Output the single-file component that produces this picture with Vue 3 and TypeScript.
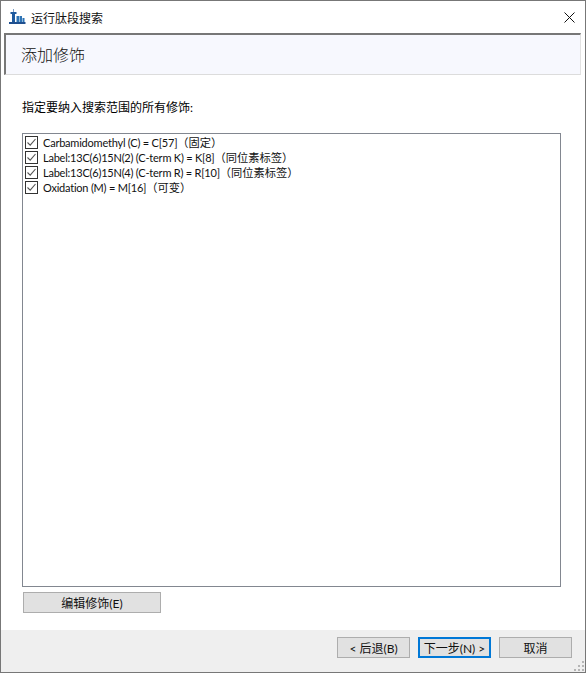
<script setup lang="ts">
type Mod = { name: string; kind: string }

const mods: Mod[] = [
  { name: 'Carbamidomethyl (C) = C[57]', kind: '（固定）' },
  { name: 'Label:13C(6)15N(2) (C-term K) = K[8]', kind: '（同位素标签）' },
  { name: 'Label:13C(6)15N(4) (C-term R) = R[10]', kind: '（同位素标签）' },
  { name: 'Oxidation (M) = M[16]', kind: '（可变）' },
]
</script>

<template>
  <main class="dialog">
    <header class="titlebar">
      <svg class="app-icon" width="17" height="16" viewBox="0 0 17 16">
        <path d="M4.2 0 H4.8 V3 H7.5 V5 H6 V13 H3 V5 H1.5 V3 H4.2 Z" fill="#1f5a9e" />
        <path d="M7.5 7 H10 V13 H7.5 Z M10.5 7 H13 V13 H10.5 Z M13.5 9 H15.5 V13 H13.5 Z" fill="#2e74b5" />
        <path d="M0 13 H16.5 V15 H0 Z" fill="#1f4f8f" />
      </svg>
      <span class="title">运行肽段搜索</span>
      <svg class="close" width="11" height="11" viewBox="0 0 11 11">
        <path d="M0.5 0.5 L10.5 10.5 M10.5 0.5 L0.5 10.5" stroke="#111" stroke-width="1" fill="none" />
      </svg>
    </header>

    <section class="banner">添加修饰</section>

    <section class="content">
      <p class="prompt">指定要纳入搜索范围的所有修饰:</p>
      <ul class="mod-list">
        <li v-for="mod in mods" :key="mod.name" class="mod">
          <span class="check">
            <svg width="11" height="11" viewBox="0 0 11 11">
              <path d="M1.5 5.5 L4.2 8.2 L9.5 2" stroke="#555" stroke-width="1.1" fill="none" />
            </svg>
          </span>
          <span class="mod-name">{{ mod.name }}</span>
          <span class="mod-kind">{{ mod.kind }}</span>
        </li>
      </ul>
      <button type="button" class="btn edit">编辑修饰(E)</button>
    </section>

    <footer class="footer">
      <button type="button" class="btn nav">&lt; 后退(B)</button>
      <button type="button" class="btn nav primary">下一步(N) &gt;</button>
      <button type="button" class="btn nav">取消</button>
      <svg class="grip" width="12" height="12" viewBox="0 0 12 12">
        <path d="M9 1h2v2H9z M5 5h2v2H5z M9 5h2v2H9z M1 9h2v2H1z M5 9h2v2H5z M9 9h2v2H9z" fill="#b5b5b5" />
      </svg>
    </footer>
  </main>
</template>

<style>
html,
body {
  margin: 0;
  background: #fff;
}
</style>

<style scoped>
.dialog {
  width: 586px;
  height: 673px;
  box-sizing: border-box;
  border: 1px solid #777;
  display: flex;
  flex-direction: column;
  background: #fff;
  color: #000;
  font-family: Lato, "Noto Sans CJK SC", sans-serif;
  font-size: 12px;
}

.titlebar {
  height: 32px;
  flex: none;
  display: flex;
  align-items: center;
  padding: 0 10px 0 8px;
}

.app-icon {
  margin-right: 5px;
}

.title {
  flex: 1;
  font-size: 12px;
  color: #111;
}

.banner {
  flex: none;
  height: 42px;
  box-sizing: border-box;
  margin: 0 4px 0 3px;
  padding: 0 0 2px 15px;
  display: flex;
  align-items: center;
  background: #f7f8fe;
  border-top: 2px solid #777;
  border-left: 2px solid #777;
  border-right: 1px solid #e2e2e2;
  border-bottom: 1px solid #dcdcdc;
  font-size: 16px;
  font-weight: 300;
  color: #111;
}

.content {
  flex: 1;
  min-height: 0;
  display: flex;
  flex-direction: column;
  padding: 0 24px 0 21px;
}

.prompt {
  margin: 25px 0 17px;
  line-height: 16px;
  font-size: 12px;
}

.mod-list {
  list-style: none;
  margin: 0;
  padding: 1px 0 0 2px;
  height: 454px;
  box-sizing: border-box;
  border: 1px solid #828790;
}

.mod {
  display: flex;
  align-items: center;
  height: 15px;
  line-height: 15px;
  white-space: nowrap;
  color: #111;
}

.mod-name {
  margin-left: 5px;
  font-size: 11px;
  letter-spacing: -0.22px;
}

.mod-kind {
  font-size: 11.25px;
}

.check {
  width: 13px;
  height: 13px;
  box-sizing: border-box;
  border: 1px solid #333;
  background: #fff;
  display: flex;
  align-items: center;
  justify-content: center;
  flex: none;
}

.btn {
  box-sizing: border-box;
  height: 21px;
  padding: 0;
  background: #e1e1e1;
  border: 1px solid #adadad;
  font-family: inherit;
  font-size: 12px;
  color: #111;
}

.edit {
  width: 138px;
  margin: 5px 0 0 1px;
}

.footer {
  position: relative;
  flex: none;
  height: 42px;
  box-sizing: border-box;
  display: flex;
  justify-content: flex-end;
  gap: 8px;
  padding: 7px 13px 0 0;
  background: #efefef;
}

.nav {
  width: 73px;
}

.primary {
  border: 2px solid #0078d7;
}

.grip {
  position: absolute;
  right: 0;
  bottom: 0;
}
</style>
